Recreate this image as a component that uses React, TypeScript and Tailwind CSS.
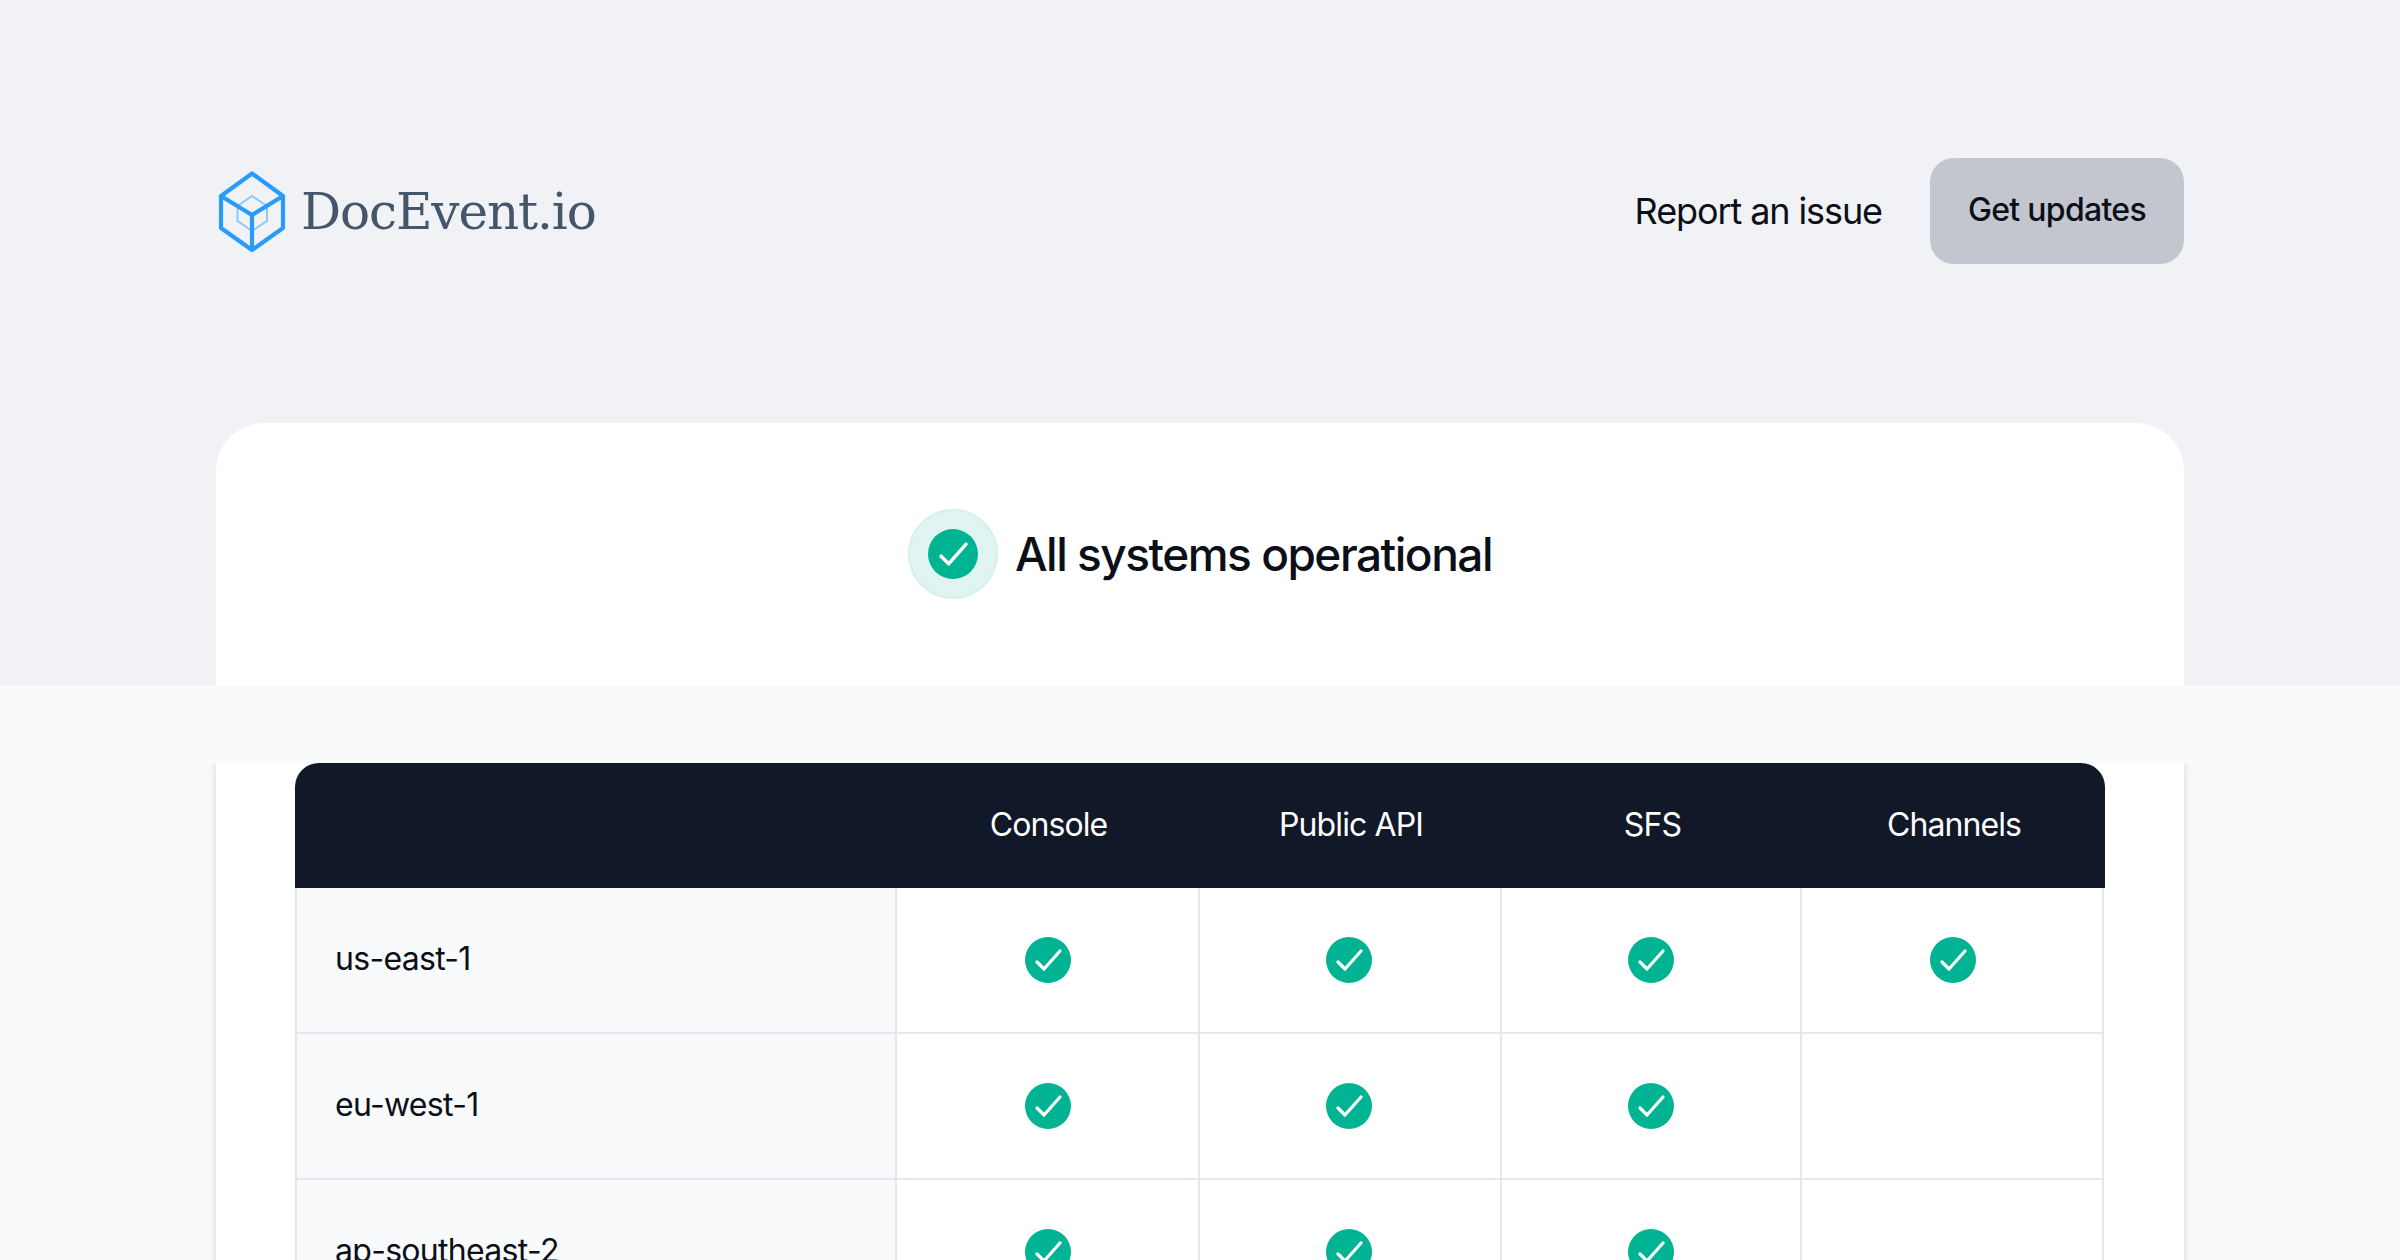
const Check = ({ size = 46 }: { size?: number }) => (
  <svg width={size} height={size} viewBox="0 0 46 46" className="block">
    <circle cx="23" cy="23" r="23" fill="#00b493" />
    <path d="M12 25 L19 32 L35 14" fill="none" stroke="#fff" strokeWidth="3.2" strokeLinecap="round" strokeLinejoin="round" />
  </svg>
);

const Logo = () => (
  <svg width="72" height="84" viewBox="0 0 72 84" className="block shrink-0">
    <g fill="none" strokeLinejoin="round" strokeLinecap="round">
      <path d="M36 27 L21.5 37 V52 L36 62 L51 52 V37 Z M21.5 37 L36 47 L51 37 M36 47 V62" stroke="#8cc8fb" strokeWidth="2" />
      <path d="M36 4.5 L67 27 V59 L36 81 L5 59 V27 Z M5 27 L36 46 L67 27 M36 46 V81" stroke="#2a9bfd" strokeWidth="4.2" />
    </g>
  </svg>
);

const rows = [
  { name: "us-east-1", checks: [true, true, true, true] },
  { name: "eu-west-1", checks: [true, true, true, false] },
  { name: "ap-southeast-2", checks: [true, true, true, false] },
];

const heads = ["Console", "Public API", "SFS", "Channels"];
const cellNudge = ["", "pr-[2px]", "", "pl-[2px]"];

export default function App() {
  return (
    <div className="h-[1260px] overflow-hidden bg-[#f9fafc] font-['Inter',sans-serif] text-[#0b0f17]">
      <section className="h-[686px] bg-[#f1f2f6] px-[216px] pt-[158px]">
        <header className="flex h-[106px] items-center justify-between">
          <div className="flex items-center gap-[13px]">
            <Logo />
            <span className="pt-[2px] font-['DejaVu_Serif',serif] text-[50px] font-[200] leading-none tracking-[-1.1px] text-[#46566a]">
              DocEvent.io
            </span>
          </div>
          <nav className="flex items-center gap-[48px]">
            <a className="text-[36px] font-normal leading-none tracking-[-1.1px]">Report an issue</a>
            <button className="flex h-[106px] w-[254px] items-center justify-center rounded-[24px] bg-[#c3c6ce] pb-[2px] text-[32px] font-medium tracking-[-0.7px]">
              Get updates
            </button>
          </nav>
        </header>
        <div className="mt-[159px] flex h-[263px] items-start justify-center gap-[17px] rounded-t-[48px] bg-white pt-[86px]">
          <div className="flex h-[90px] w-[90px] items-center justify-center rounded-full border-2 border-[#d5f1ec] bg-[#e0f5f1]">
            <Check size={50} />
          </div>
          <h1 className="text-[46px] font-medium leading-[90px] tracking-[-1.5px]">All systems operational</h1>
        </div>
      </section>
      <section className="px-[216px] pt-[77px]">
        <div className="bg-white px-[79px] shadow-[0_0_8px_rgba(17,24,39,0.16)] [clip-path:inset(0_-40px_0_-40px)]">
          <div className="grid grid-cols-[602px_303px_302px_301px_302px] rounded-t-[24px] bg-[#111827] text-white">
            {["", ...heads].map((h, i) => (
              <div key={i} className="flex h-[125px] items-center justify-center pb-[2px] text-[32px] tracking-[-0.9px]">
                {h}
              </div>
            ))}
          </div>
          {rows.map((r) => (
            <div key={r.name} className="mr-[1px] grid h-[146px] grid-cols-[602px_303px_302px_300px_302px] border-b-2 border-[#e6e7ec]">
              <div className="flex items-center border-x-2 border-[#e6e7ec] bg-[#f9fafc] pb-[3px] pl-[38px] text-[32px] tracking-[-0.7px]">
                {r.name}
              </div>
              {r.checks.map((c, i) => (
                <div key={i} className={`flex items-center justify-center border-r-2 border-[#e6e7ec] ${cellNudge[i]}`}>
                  {c && <Check />}
                </div>
              ))}
            </div>
          ))}
        </div>
      </section>
    </div>
  );
}
